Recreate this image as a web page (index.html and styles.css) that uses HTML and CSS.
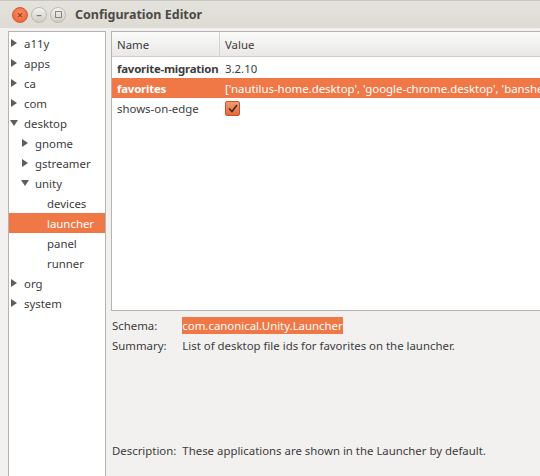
FILE: index.html
```html
<!DOCTYPE html>
<html lang="en">
<head>
  <meta charset="UTF-8">
  <title>Configuration Editor</title>
  <link rel="stylesheet" href="styles.css">
</head>
<body>

  <div class="window">
    <div class="titlebar">
      <div class="controls">
        <span class="btn close">&#215;</span>
        <span class="btn">&#8211;</span>
        <span class="btn max"><span class="box"></span></span>
      </div>
      <div class="title">Configuration Editor</div>
    </div>

    <div class="content">
      <!-- schema tree -->
      <div class="tree">
        <div class="node lvl1"><span class="arrow right"></span>a11y</div>
        <div class="node lvl1"><span class="arrow right"></span>apps</div>
        <div class="node lvl1"><span class="arrow right"></span>ca</div>
        <div class="node lvl1"><span class="arrow right"></span>com</div>
        <div class="node lvl1"><span class="arrow down"></span>desktop</div>
        <div class="node lvl2"><span class="arrow right"></span>gnome</div>
        <div class="node lvl2"><span class="arrow right"></span>gstreamer</div>
        <div class="node lvl2"><span class="arrow down"></span>unity</div>
        <div class="node lvl3">devices</div>
        <div class="node lvl3 selected">launcher</div>
        <div class="node lvl3">panel</div>
        <div class="node lvl3">runner</div>
        <div class="node lvl1"><span class="arrow right"></span>org</div>
        <div class="node lvl1"><span class="arrow right"></span>system</div>
      </div>

      <div class="main">
        <div class="keys">
          <div class="row head">
            <div class="col-name">Name</div>
            <div class="col-value">Value</div>
          </div>
          <div class="row">
            <div class="col-name bold">favorite-migration</div>
            <div class="col-value">3.2.10</div>
          </div>
          <div class="row selected">
            <div class="col-name bold">favorites</div>
            <div class="col-value">['nautilus-home.desktop', 'google-chrome.desktop', 'banshee.desktop', 'gnome-terminal.desktop']</div>
          </div>
          <div class="row">
            <div class="col-name">shows-on-edge</div>
            <div class="col-value">
              <span class="check">
                <svg width="10" height="9" viewBox="0 0 10 9"><path d="M1 4.5 L4 7.5 L9 1" fill="none" stroke="#3c2a20" stroke-width="1.6"/></svg>
              </span>
            </div>
          </div>
        </div>

        <div class="info">
          <span class="label">Schema:</span>
          <span class="text"><span class="hl">com.canonical.Unity.Launcher</span></span>
          <span class="label">Summary:</span>
          <span class="text">List of desktop file ids for favorites on the launcher.</span>
          <span class="label desc">Description:</span>
          <span class="text desc">These applications are shown in the Launcher by default.</span>
        </div>
      </div>
    </div>
  </div>

</body>
</html>
```

FILE: styles.css
```css
body {
  margin: 0;
  font-family: 'Noto Sans', 'DejaVu Sans', sans-serif;
  font-size: 11.4px;
  color: #3c3c3c;
  background: #f2f1f0;
  overflow: hidden;
}

.window {
  width: 540px;
  height: 476px;
  display: flex;
  flex-direction: column;
}

/* Title bar */
.titlebar {
  height: 28px;
  display: flex;
  align-items: center;
  background: linear-gradient(#e4e2dc, #dedbd4);
  border-top: 1px solid #c9c6bf;
  box-sizing: border-box;
}

.controls {
  display: flex;
  gap: 3px;
  padding-left: 12px;
  width: 63px;
}

.btn {
  width: 14px;
  height: 14px;
  border-radius: 50%;
  background: linear-gradient(#f4f3f0, #cfccc5);
  border: 1px solid #bdb9b1;
  color: #7d7a74;
  font-size: 11px;
  line-height: 14px;
  text-align: center;
  font-weight: bold;
}

.btn.close {
  background: radial-gradient(circle at 50% 40%, #f7946a, #e8592b);
  border-color: #d9582e;
  color: #b23c16;
}

.btn.max {
  display: flex;
  align-items: center;
  justify-content: center;
}

.box {
  width: 5px;
  height: 5px;
  border: 1px solid #8a8680;
}

.title {
  font-weight: bold;
  font-size: 12.5px;
  color: #4c4a46;
}

.content {
  flex: 1;
  display: flex;
  padding-top: 3px;
}

/* Tree */
.tree {
  width: 96px;
  margin-left: 8px;
  background: #fff;
  border: 1px solid #b6b4b0;
  border-bottom: none;
  padding-top: 1px;
}

.node {
  height: 20px;
  display: flex;
  align-items: center;
  white-space: nowrap;
}

.lvl1 { padding-left: 2px; }
.lvl2 { padding-left: 13px; }
.lvl3 { padding-left: 38px; }

.node.selected {
  background: #f07746;
  color: #fff;
}

.arrow {
  width: 0;
  height: 0;
}

.arrow.right {
  border-top: 4px solid transparent;
  border-bottom: 4px solid transparent;
  border-left: 6px solid #5f5d59;
  margin-right: 7px;
}

.arrow.down {
  border-left: 4px solid transparent;
  border-right: 4px solid transparent;
  border-top: 6px solid #5f5d59;
  margin-left: -1px;
  margin-right: 6px;
}

/* Right pane */
.main {
  flex: 1;
  display: flex;
  flex-direction: column;
  margin-left: 5px;
  min-width: 0;
}

.keys {
  height: 278px;
  background: #fff;
  border: 1px solid #b6b4b0;
  border-right: none;
  overflow: hidden;
}

.row {
  display: flex;
  height: 20px;
  align-items: center;
  white-space: nowrap;
}

.row.head {
  height: 25px;
  background: linear-gradient(#fbfbfa, #e9e8e6);
  border-bottom: 1px solid #cfcdc9;
  box-sizing: border-box;
  margin-bottom: 1px;
}

.col-name {
  width: 108px;
  padding-left: 5px;
  box-sizing: border-box;
  flex-shrink: 0;
  overflow: hidden;
}

.row.head .col-name {
  height: 100%;
  display: flex;
  align-items: center;
  border-right: 1px solid #d4d2ce;
}

.col-value {
  padding-left: 5px;
  overflow: hidden;
}

.bold {
  font-weight: bold;
  letter-spacing: -0.2px;
}

.row.selected {
  background: #f07746;
  color: #fff;
}

.check {
  display: flex;
  align-items: center;
  justify-content: center;
  width: 13px;
  height: 13px;
  border: 1px solid #c5532a;
  border-radius: 2px;
  background: linear-gradient(#f49a72, #e86a3a);
  margin-top: 1px;
}

/* Info */
.info {
  display: grid;
  grid-template-columns: auto 1fr;
  grid-auto-rows: 20px;
  column-gap: 6px;
  align-items: center;
  padding-top: 4px;
  padding-left: 1px;
  white-space: nowrap;
}

.info .desc {
  margin-top: 170px;
}

.hl {
  background: #f07746;
  color: #fff;
  padding: 1px 0;
}
```
